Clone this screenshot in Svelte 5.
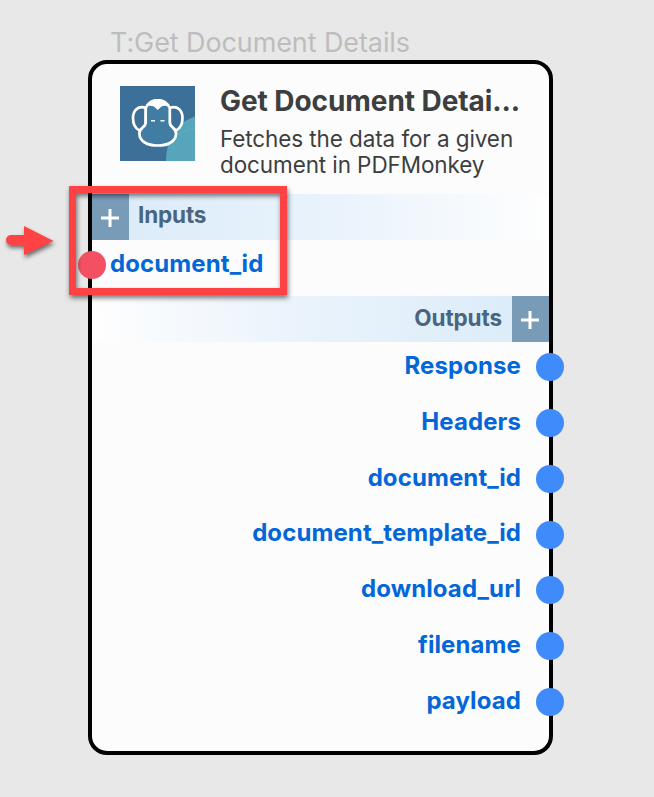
<script>
  const outputs = ['Response', 'Headers', 'document_id', 'document_template_id', 'download_url', 'filename', 'payload'];
</script>

<main>
  <div class="caption"><span>T:Get Document Details</span></div>
  <section class="card">
    <header>
      <svg class="logo" viewBox="0 0 75 75">
        <rect width="75" height="75" fill="#3c7099" />
        <path d="M46 75C46 54 57 36 75 30.500V75Z" fill="#56a5bb" />
        <path d="M46 61Q56 45 75 42" fill="none" stroke="#69afc3" stroke-width=".7" />
        <g fill="none" stroke="#fff" stroke-width="2.700" stroke-linejoin="round">
          <path d="M26 22C17.500 19 13 25 13 32C13 38 15.500 42.500 19.500 44.500C23.500 42 25.700 40 25.700 37Z" />
          <path d="M49.500 22C58 19 62.500 25 62.500 32C62.500 38 60 42.500 56 44.500C52 42 49.800 40 49.800 37Z" />
          <path d="M25.700 22V37C25.700 41 19.400 42 19.400 47.500C19.400 55.500 27.500 59.500 37.700 59.500C48 59.500 56 55.500 56 47.500C56 42 49.800 41 49.800 37V22C47.500 17 43 14.300 37.700 14.300C32.500 14.300 28 17 25.700 22Z" fill="#417da3" />
        </g>
        <path d="M26.500 21C28 15.500 32 13 37.700 13C43.500 13 47.500 15.500 49 21C46.500 19.500 43.500 19.500 41.500 20.500L37.700 24L34 20.500C31.500 19.500 28.500 19.500 26.500 21Z" fill="#fff" />
        <path d="M31 34.800h4M40.500 34.800h4" stroke="#fff" stroke-width="1.600" />
      </svg>
      <div class="about">
        <h1><span>Get Document Detai...</span></h1>
        <p><span>Fetches the data for a given</span><br /><span>document in PDFMonkey</span></p>
      </div>
    </header>
    <div class="band inputs">
      <button aria-label="Add input"><svg viewBox="0 0 18 18"><path d="M9 0V18M0 9H18" /></svg></button>
      <span>Inputs</span>
    </div>
    <div class="input-row"><i class="port"></i><span>document_id</span></div>
    <div class="band outputs">
      <span>Outputs</span>
      <button aria-label="Add output"><svg viewBox="0 0 18 18"><path d="M9 0V18M0 9H18" /></svg></button>
    </div>
    <ul>
      {#each outputs as name}
        <li><span>{name}</span><i class="port"></i></li>
      {/each}
    </ul>
  </section>
  <div class="highlight"></div>
  <svg class="arrow" viewBox="0 0 60 50"><path d="M11 15H24V6L53.500 21L24 35V25H11A5 5 0 0 1 11 15Z" fill="#ff4344" /></svg>
</main>

<style>
  :global(body) { background: #e8e8e8; }
  main {
    position: relative;
    box-sizing: border-box;
    width: 654px;
    height: 797px;
    padding: 25px 0 0 88px;
    overflow: hidden;
    background: #e8e8e8;
    font-family: Inter, sans-serif;
  }
  .caption {
    height: 34.500px;
    padding-left: 22px;
    color: #bdbdbd;
    font-size: 27px;
    line-height: 35px;
    letter-spacing: -.1px;
    white-space: nowrap;
  }
  .card {
    box-sizing: border-box;
    width: 465px;
    height: 695.500px;
    border: 4px solid #000;
    border-radius: 19px;
    background: #fcfcfc;
  }
  header { display: flex; height: 130px; box-sizing: border-box; padding: 22.500px 0 0 28px; }
  .logo { width: 75px; height: 75px; flex: none; }
  .about { padding-left: 25px; white-space: nowrap; color: #3d3e40; }
  h1 { margin: -3px 0 0; font-size: 28px; line-height: 36px; font-weight: 700; letter-spacing: -.07px; }
  p { margin: 6.500px 0 0; font-size: 22.500px; line-height: 26px; letter-spacing: -.1px; }
  .band { display: flex; align-items: center; height: 46.500px; }
  .band.inputs { background: linear-gradient(90deg, #d9ebf8, #ecf4fc 60%, #fefefe); }
  .band.outputs { justify-content: flex-end; background: linear-gradient(270deg, #d9ebf8, #ecf4fc 60%, #fefefe); }
  .band > span { margin: -3px 9px 0; color: #4a6580; font-size: 22.500px; line-height: 28px; font-weight: 700; letter-spacing: -.15px; }
  .band.outputs > span { margin: -2px 10px 0 0; letter-spacing: -.1px; }
  button { display: grid; place-items: center; width: 37px; height: 100%; padding: 3px 1px 0 0; box-sizing: border-box; border: 0; background: #789bb7; }
  button svg { width: 18px; height: 18px; }
  button path { fill: none; stroke: #fff; stroke-width: 3; }
  .port { flex: none; width: 28px; height: 28px; border-radius: 50%; }
  .input-row, li { color: #0367d8; font-size: 24px; line-height: 30px; font-weight: 700; letter-spacing: .1px; }
  .input-row { display: flex; align-items: center; height: 55.500px; box-sizing: border-box; padding-bottom: 5.500px; }
  .input-row .port { margin: 0 4px 0 -14px; background: #f45063; }
  .input-row span { margin-top: -2px; }
  ul { list-style: none; margin: -2.500px -15px 0 0; padding: 0; }
  li { display: flex; align-items: center; justify-content: flex-end; height: 55.750px; }
  li span { margin-top: -2.500px; }
  li .port { margin-left: 15px; background: #3f8bfb; }
  .highlight {
    position: absolute;
    left: 69px;
    top: 186px;
    box-sizing: border-box;
    width: 218px;
    height: 109px;
    border: 7px solid #ff4344;
    box-shadow: 1px 3px 5px #0008, inset 1px 3px 5px #0008;
  }
  .arrow { position: absolute; left: 0; top: 220px; width: 60px; height: 50px; filter: drop-shadow(1px 3px 2px #0008); }
</style>
